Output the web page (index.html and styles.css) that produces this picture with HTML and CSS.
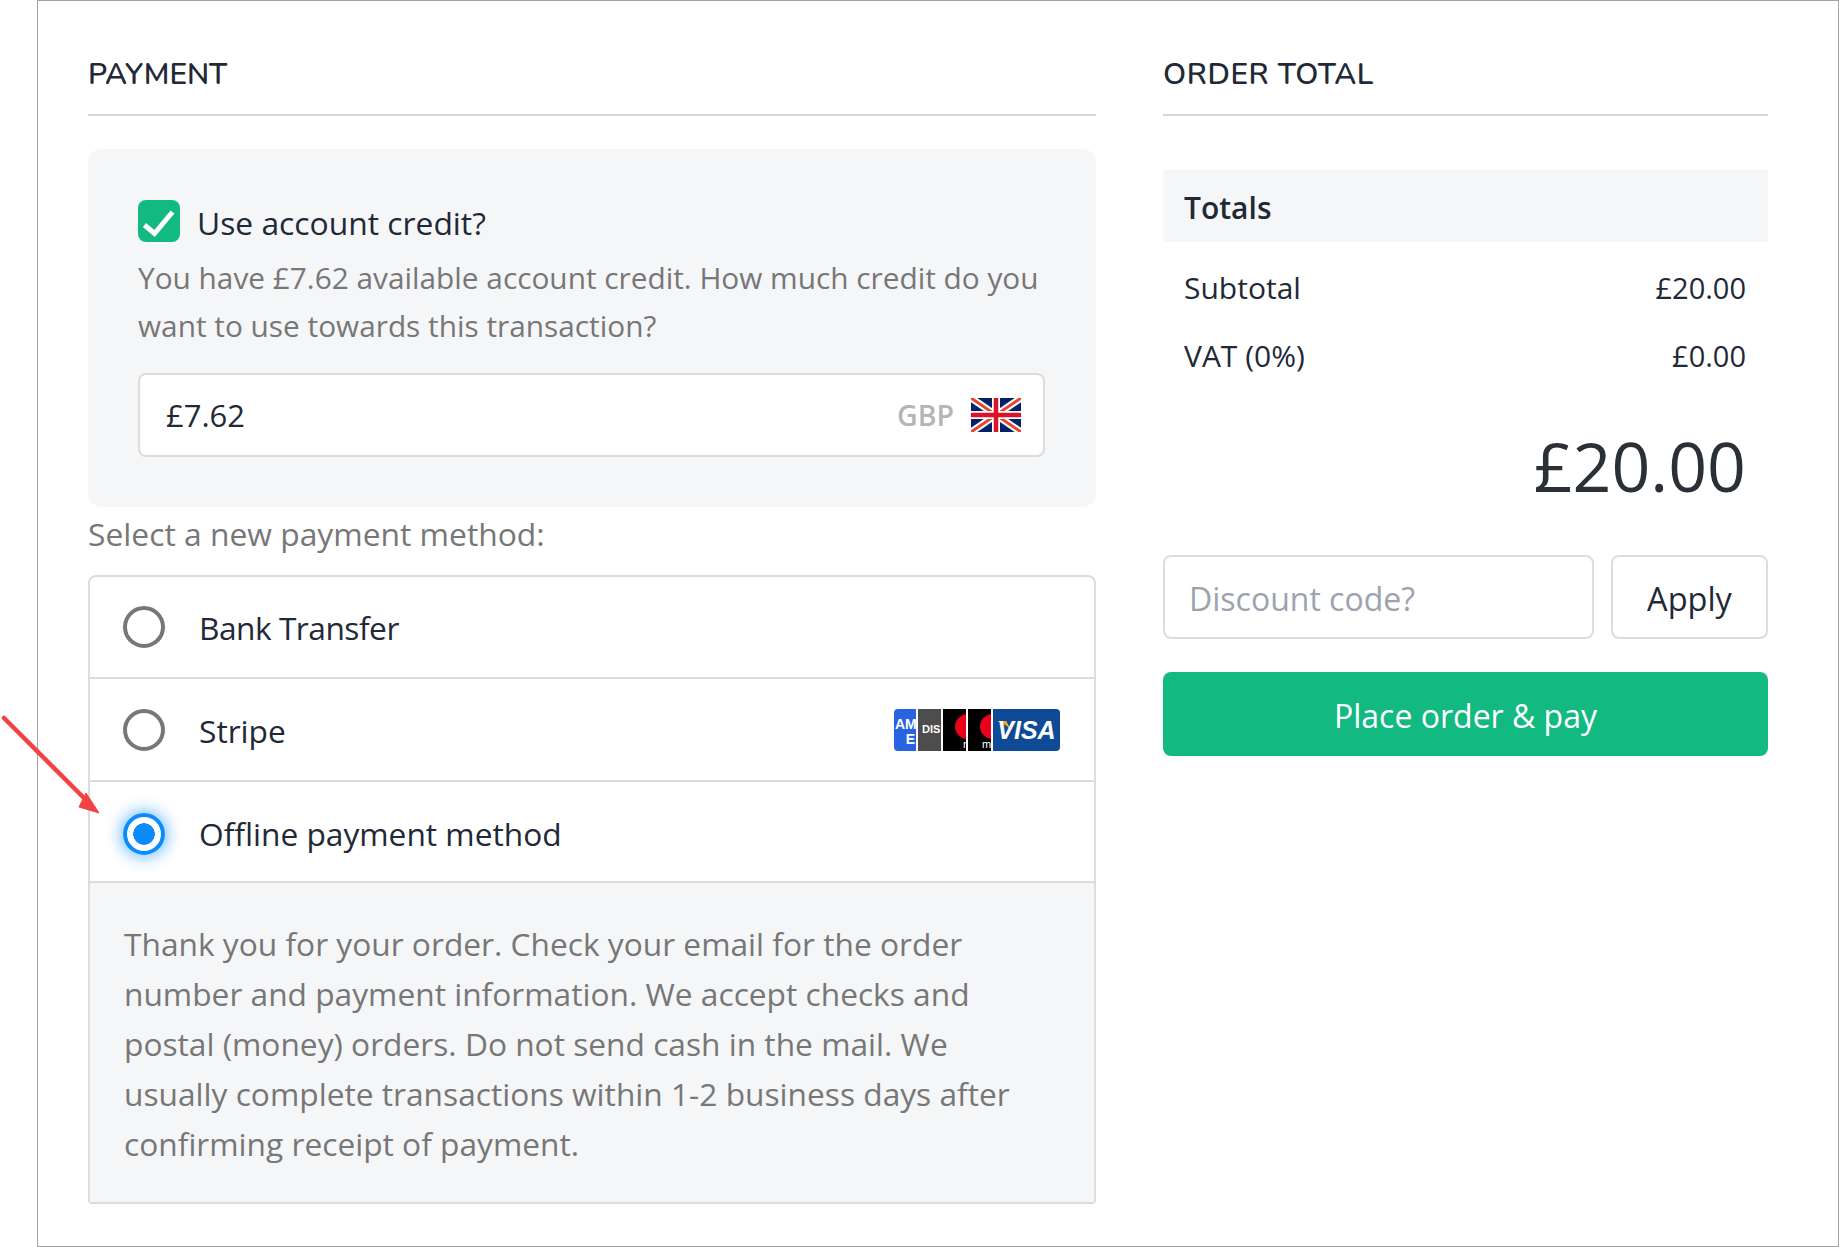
FILE: index.html
```html
<!DOCTYPE html>
<html lang="en">
<head>
<meta charset="utf-8">
<title>Payment</title>
<link rel="stylesheet" href="styles.css">
</head>
<body>
<main class="frame">
  <section class="col-pay">
    <h2 class="heading">PAYMENT</h2>
    <div class="credit">
      <div class="credit-check">
        <span class="checkbox"><svg viewBox="0 0 42 42" width="42" height="42"><path d="M6.5 25 L16.5 33.5 L34.5 12" fill="none" stroke="#fff" stroke-width="5"/></svg></span>
        <span class="credit-label">Use account credit?</span>
      </div>
      <p class="credit-text">You have £7.62 available account credit. How much credit do you want to use towards this transaction?</p>
      <div class="amount">
        <span class="amount-value">£7.62</span>
        <span class="amount-cur">GBP</span>
        <svg class="flag" viewBox="0 0 50 34" width="50" height="34">
          <rect width="50" height="34" fill="#012169"/>
          <path d="M0 0L50 34M50 0L0 34" stroke="#fff" stroke-width="7"/>
          <path d="M0 0L50 34M50 0L0 34" stroke="#e8452c" stroke-width="3"/>
          <path d="M25 0V34M0 17H50" stroke="#fff" stroke-width="8"/>
          <path d="M25 0V34M0 17H50" stroke="#d8132a" stroke-width="4.5"/>
        </svg>
      </div>
    </div>
    <p class="select-label">Select a new payment method:</p>
    <div class="methods">
      <div class="method">
        <span class="radio"></span>
        <span class="method-name method-name-tight">Bank Transfer</span>
      </div>
      <div class="method method-stripe">
        <span class="radio"></span>
        <span class="method-name">Stripe</span>
        <div class="cards">
          <span class="card card-amex"><span class="amex-1">AME</span><span class="amex-2">E</span></span>
          <span class="card card-disc">DIS</span>
          <span class="card card-mc"><i class="mc-dot"></i><span class="mc-text">m</span></span>
          <span class="card card-mc"><i class="mc-dot"></i><span class="mc-text">mo</span></span>
          <span class="card card-visa">
            <svg class="visa-swoosh" viewBox="0 0 14 9" width="14" height="9"><path d="M0 0H9.5L13.5 9C10.500 4.500 5 1.500 0 0Z" fill="#f2a81e"/></svg>
            <span class="visa-text">VISA</span>
          </span>
        </div>
      </div>
      <div class="method method-offline">
        <span class="radio radio-on"></span>
        <span class="method-name">Offline payment method</span>
      </div>
      <div class="method-info">Thank you for your order. Check your email for the order number and payment information. We accept checks and postal (money) orders. Do not send cash in the mail. We usually complete transactions within 1-2 business days after confirming receipt of payment.</div>
    </div>
  </section>
  <aside class="col-total">
    <h2 class="heading heading-total">ORDER TOTAL</h2>
    <div class="totals-head">Totals</div>
    <div class="total-row"><span>Subtotal</span><span class="total-val">£20.00</span></div>
    <div class="total-row"><span>VAT (0%)</span><span class="total-val">£0.00</span></div>
    <div class="grand">£20.00</div>
    <div class="discount">
      <input class="discount-input" type="text" placeholder="Discount code?">
      <button class="apply" type="button">Apply</button>
    </div>
    <button class="place" type="button">Place order &amp; pay</button>
  </aside>
  <svg class="arrow" viewBox="0 0 110 110" width="110" height="110">
    <path d="M3 3 L88 88" stroke="#f44141" stroke-width="4.500" stroke-linecap="round" fill="none"/>
    <path d="M98 98 L85 78 L78 92 Z" fill="#f44141" stroke="#f44141" stroke-width="1"/>
  </svg>
</main>
</body>
</html>
```
FILE: styles.css
```css
* { box-sizing: border-box; }
html, body { margin: 0; padding: 0; background: #fff; }
body {
  width: 1839px;
  height: 1247px;
  padding-left: 37px;
  font-family: "Open Sans", "Noto Sans", sans-serif;
  color: #1f2937;
  overflow: hidden;
}
.frame {
  position: relative;
  width: 1802px;
  height: 1247px;
  border: 1px solid #a3a3a3;
  padding: 0 70px 0 50px;
  display: grid;
  grid-template-columns: 1008px 605px;
  column-gap: 67px;
  align-items: start;
}
.heading {
  margin: 0;
  height: 115px;
  padding-top: 55px;
  border-bottom: 2px solid #d6d6d6;
  font-family: "Nunito", "Open Sans", sans-serif;
  font-weight: 600;
  font-size: 29.800px;
  line-height: 38px;
  color: #1f2937;
}
.heading-total { letter-spacing: .6px; }
.credit {
  margin-top: 33px;
  height: 358px;
  padding: 51px 50px 0;
  background: #f5f6f8;
  border-radius: 14px;
}
.credit-check { display: flex; align-items: center; gap: 17px; height: 42px; }
.checkbox { width: 42px; height: 42px; border-radius: 8px; background: #12b981; display: block; }
.checkbox svg { display: block; }
.credit-label { font-size: 31.800px; color: #1f2937; position: relative; top: 1px; }
.credit-text { margin: 12px 0 0; font-size: 29.800px; line-height: 48px; color: #777; }
.amount {
  margin: 23px 1px 0 0;
  height: 84px;
  background: #fff;
  border: 2px solid #dcdcdc;
  border-radius: 8px;
  display: flex;
  align-items: center;
  padding: 0 22px 0 26px;
}
.amount-value { font-size: 31px; color: #1f2937; flex: 1; }
.amount-cur { font-size: 28.500px; font-weight: 600; color: #b5b5b5; margin-right: 17px; }
.flag { display: block; }
.select-label { margin: 5px 0 0; font-size: 31.800px; line-height: 44px; color: #777; }
.methods {
  margin-top: 19px;
  border: 2px solid #dcdcdc;
  border-radius: 8px 8px 4px 4px;
}
.method {
  height: 102px;
  display: flex;
  align-items: center;
  padding: 0 34px 0 33px;
  border-bottom: 2px solid #dcdcdc;
}
.method-stripe { height: 103px; padding-top: 1px; }
.method-offline { height: 101px; padding-top: 4px; }
.radio {
  width: 42px;
  height: 42px;
  border-radius: 50%;
  border: 4px solid #777;
  background: #fff;
  flex: none;
  margin-right: 34px;
}
.radio-on {
  border-color: #0a8cff;
  background: radial-gradient(circle, #0a8cff 0 10.500px, #fff 11px);
  box-shadow: 0 0 14px 4px rgba(10, 140, 255, .45);
}
.method-name { font-size: 31.700px; color: #1f2937; flex: 1; }
.method-name-tight { letter-spacing: -.5px; }
.cards { display: flex; gap: 2px; height: 42px; }
.card { display: block; height: 42px; position: relative; overflow: hidden; color: #fff; font-family: "Liberation Sans", sans-serif; }
.card-amex { width: 22px; background: #2a63e0; border-radius: 4px 0 0 4px; font-weight: 700; font-size: 14px; line-height: 15px; }
.amex-1 { display: block; margin-top: 8px; margin-left: 1px; }
.amex-2 { display: block; text-align: right; padding-right: 1px; }
.card-disc { width: 23px; background: #4d4d4d; font-size: 11px; font-weight: 700; line-height: 40px; padding-left: 4px; }
.card-mc { width: 23px; background: #000; }
.mc-dot { position: absolute; left: 12px; top: 5px; width: 25px; height: 25px; border-radius: 50%; background: #eb001b; }
.mc-text { position: absolute; left: 20px; bottom: 0; font-size: 11px; line-height: 13px; }
.card-mc + .card-mc .mc-text { left: 14px; }
.card-visa {
  width: 67px;
  background: #0f4a97;
  border-radius: 0 4px 4px 0;
  font-size: 25px;
  font-weight: 700;
  font-style: italic;
  line-height: 42px;
  text-align: center;
}
.visa-swoosh { position: absolute; left: 4px; top: 12px; }
.visa-text { position: relative; }
.method-info {
  height: 319px;
  padding: 36px 65px 0 34px;
  background: #f5f6f8;
  font-size: 31.700px;
  line-height: 50px;
  color: #777;
}
.col-total { display: block; }
.totals-head {
  margin-top: 54px;
  height: 72px;
  padding-left: 21px;
  background: #f5f6f8;
  font-size: 30px;
  font-weight: 600;
  line-height: 75px;
  color: #1f2937;
}
.total-row {
  display: flex;
  justify-content: space-between;
  height: 68px;
  padding: 0 22px 0 21px;
  font-size: 30px;
  line-height: 92px;
}
.total-row .total-val { font-size: 29px; }
.grand {
  margin-top: 49px;
  padding-right: 22px;
  height: 78px;
  text-align: right;
  font-size: 68px;
  line-height: 78px;
  color: #2b2f36;
}
.discount { margin-top: 50px; display: flex; gap: 17px; }
.discount-input {
  width: 431px;
  height: 84px;
  border: 2px solid #dcdcdc;
  border-radius: 8px;
  padding: 2px 24px 0;
  font: 32px "Open Sans", sans-serif;
  background: #fff;
  outline: none;
}
.discount-input::placeholder { color: #9ca3af; opacity: 1; }
.apply {
  width: 157px;
  height: 84px;
  border: 2px solid #dcdcdc;
  border-radius: 8px;
  background: #fff;
  padding: 2px 0 0;
  font: 32.500px "Open Sans", sans-serif;
  color: #1f2937;
}
.place {
  display: block;
  width: 100%;
  height: 84px;
  margin-top: 33px;
  padding: 2px 0 0;
  border: 0;
  border-radius: 8px;
  background: #12b981;
  color: #fff;
  font: 32px "Open Sans", sans-serif;
}
.arrow { position: absolute; left: -37px; top: 714px; }
```
